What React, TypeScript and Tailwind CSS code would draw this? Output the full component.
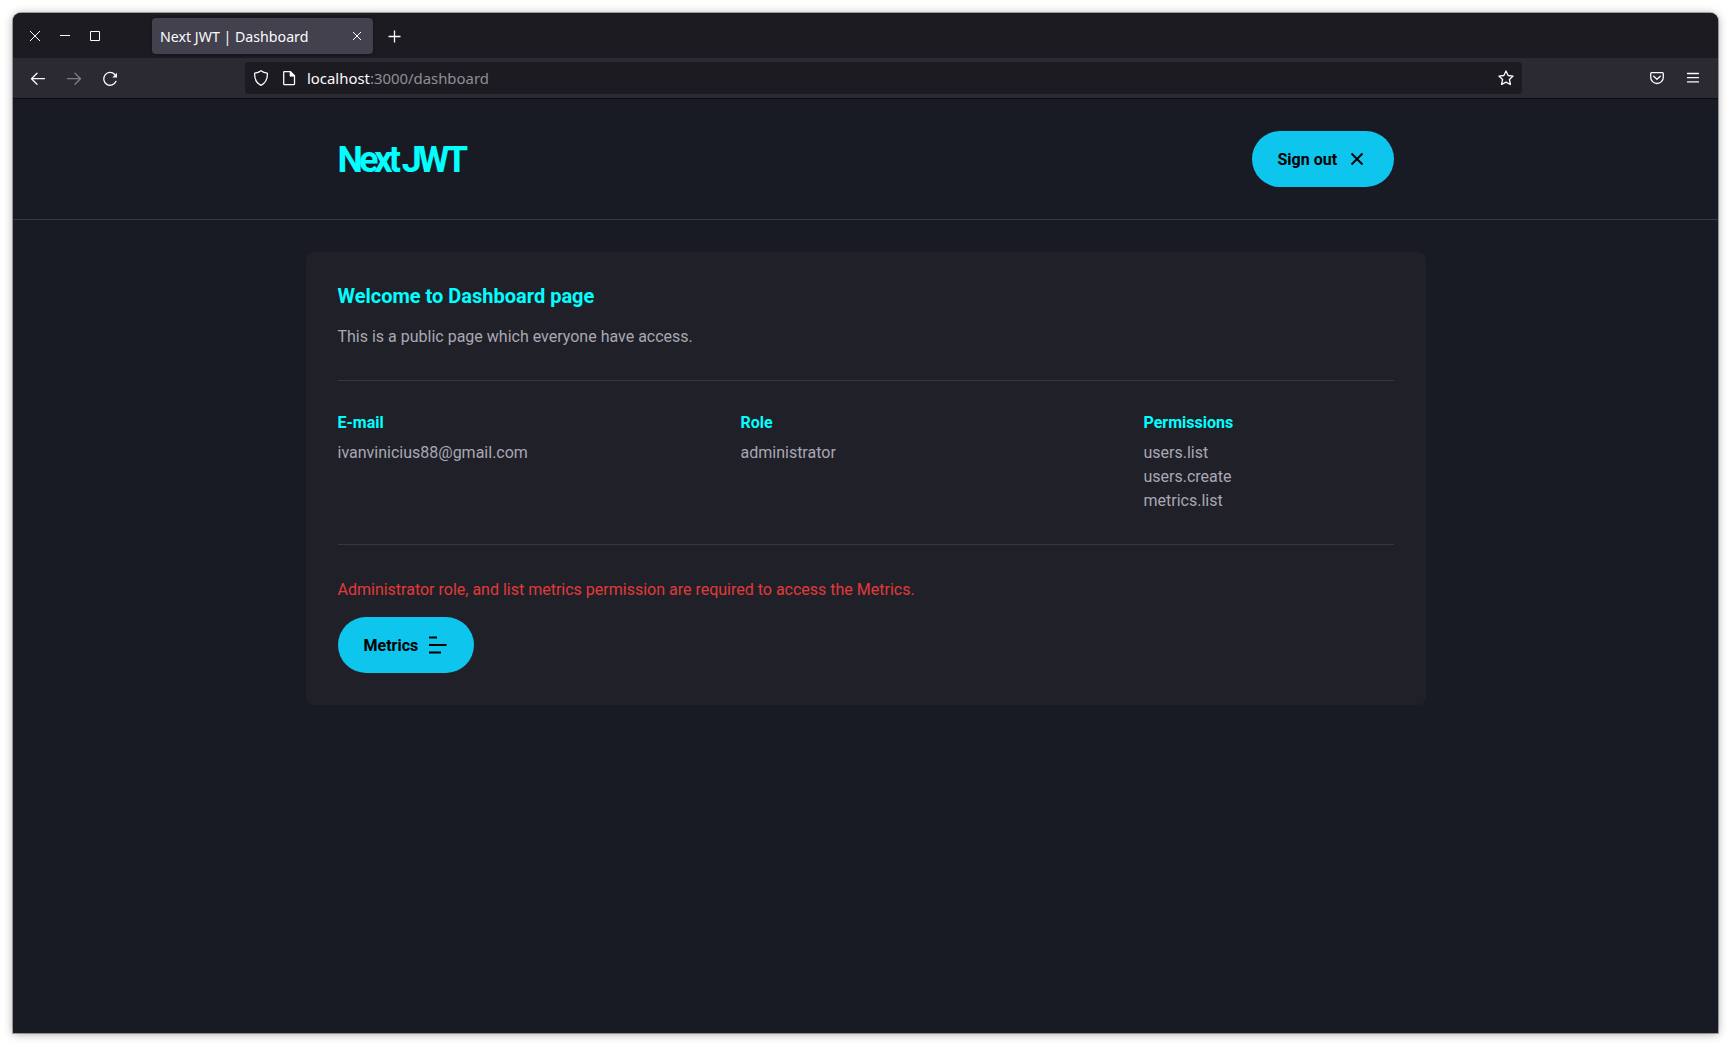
import React from "react";

const ui = "font-['Noto_Sans',sans-serif]";

function PillButton({ label, icon, className }: { label: string; icon: React.ReactNode; className: string }) {
  return (
    <button className={`flex h-14 items-center rounded-[28px] bg-[#0ec6ed] pl-[26px] text-base font-bold text-black ${className}`}>
      <span className="pt-0.5">{label}</span>
      {icon}
    </button>
  );
}

function TabBar() {
  return (
    <div className="flex h-[45px] bg-[#1c1b22] text-[#fbfbfe]">
      <svg className="ml-[12px] h-[45px] w-[127px]" viewBox="0 0 127 45" fill="none" stroke="currentColor">
        <path d="M5 18l10 10M15 18L5 28M35 22.5h10M65.5 18.5h9v9h-9z" />
      </svg>
      <div className="mt-[5px] flex h-9 w-[221px] items-center rounded bg-[#42414d] pl-2 pr-[10px] shadow-[0_0_3px_rgba(0,0,0,0.5)]">
        <span className={`${ui} flex-1 whitespace-nowrap pt-0.5 text-[14.2px]`}>Next JWT | Dashboard</span>
        <svg className="size-3" viewBox="0 0 12 12" stroke="currentColor" fill="none">
          <path d="M2 2l8 8M10 2L2 10" />
        </svg>
      </div>
      <svg className="ml-[15px] mt-[17px] size-[13px]" viewBox="0 0 13 13" stroke="currentColor" strokeWidth="1.3" fill="none">
        <path d="M6.5 .5v12M.5 6.5h12" />
      </svg>
    </div>
  );
}

function Toolbar() {
  return (
    <div className="flex h-[41px] items-start border-b border-[#0c0c0d] bg-[#2b2a33] pt-1 text-[#fbfbfe]">
      <svg className="h-8 w-[232px]" viewBox="0 0 232 32" fill="none" stroke="currentColor" strokeWidth="1.3" strokeLinecap="round" strokeLinejoin="round">
        <path d="M31.5 16.7H18.7M24 11.2l-5.5 5.5 5.5 5.5" />
        <path d="M54.5 16.7h12.8M62 11.2l5.5 5.5-5.5 5.5" opacity=".4" />
        <path d="M103 19.3a6.4 6.4 0 1 1-1.2-6.8" />
        <path d="M104 10.8v4.7h-4.7z" fill="currentColor" stroke="none" />
      </svg>
      <div className="flex h-8 w-[1277px] items-center rounded bg-[#1c1b22]">
        <svg className="h-8 w-[62px]" viewBox="0 0 62 32" fill="none" stroke="currentColor" strokeWidth="1.3" strokeLinejoin="round">
          <path d="M16 8.8q-2.6 2-6.3 2.4c-.4 5.5 1.8 9.9 6.3 12.2 4.5-2.3 6.7-6.7 6.3-12.2q-3.7-.4-6.3-2.4z" />
          <path d="M38.7 10.2q0-.5.5-.5h6.3l4 4v8.3q0 .7-.7.7h-9.4q-.7 0-.7-.7z" />
          <path d="M45 9.5v4.7h4.8z" fill="currentColor" strokeWidth=".7" />
        </svg>
        <span className={`${ui} flex-1 text-[14.9px] text-[#8f8f95]`}>
          <span className="text-[#fbfbfe]">localhost</span>:3000/dashboard
        </span>
        <svg className="mr-2 size-4" viewBox="0 0 16 16" fill="none" stroke="currentColor" strokeWidth="1.3" strokeLinejoin="round">
          <path d="M8 1l2.1 4.5 5 .6-3.7 3.4 1 5L8 12.1l-4.4 2.4 1-5L.9 6.1l5-.6z" />
        </svg>
      </div>
      <svg className="ml-[127px] mt-2 h-4 w-[52px]" viewBox="0 0 52 16" fill="none" stroke="currentColor" strokeWidth="1.3" strokeLinecap="round" strokeLinejoin="round">
        <path d="M2.7 2.7h10.6q1 0 1 1v3.5a6.3 6.3 0 0 1-12.6 0v-3.5q0-1 1-1z" />
        <path d="M4.7 6.2L8 9.3l3.3-3.1" />
        <path d="M38.5 3.5h11M38.5 7.7h11M38.5 11.9h11" />
      </svg>
    </div>
  );
}

function Field({ label, values }: { label: string; values: string[] }) {
  return (
    <div className="w-[250px]">
      <h3 className="mb-[9px] text-base leading-[19px] font-bold text-[#00ffff]">{label}</h3>
      {values.map((v) => (
        <p key={v}>{v}</p>
      ))}
    </div>
  );
}

export default function App() {
  return (
    <div className="h-[1047px] overflow-hidden bg-white p-[13px] font-[Roboto,sans-serif]">
      <div className="h-[1020px] w-[1704.5px] overflow-hidden rounded-t-lg bg-[#191b24] shadow-[0_0_0_1px_rgba(0,0,0,0.3),0_1px_10px_rgba(0,0,0,0.35)]">
        <TabBar />
        <Toolbar />
        <header className="border-b border-[#353646]">
          <div className="ml-[292.5px] flex h-[120px] w-[1120px] items-center justify-between px-8">
            <h1 className="pt-0.5 text-4xl font-bold tracking-[-4px] text-[#00ffff]">Next JWT</h1>
            <PillButton
              label="Sign out"
              className="w-[142px]"
              icon={
                <svg className="ml-[7.5px] size-6" viewBox="0 0 24 24" stroke="currentColor" strokeWidth="1.9" fill="none">
                  <path d="M6.5 6.5l11 11M17.5 6.5l-11 11" />
                </svg>
              }
            />
          </div>
        </header>
        <main className="mt-8 ml-[292.5px] w-[1120px] rounded-lg bg-[#202029] p-8 text-base leading-6 text-[#a8a8b3]">
          <h2 className="mb-[17px] text-xl leading-6 font-bold text-[#00ffff]">Welcome to Dashboard page</h2>
          <p>This is a public page which everyone have access.</p>
          <section className="mt-[31px] mb-[33px] flex justify-between border-y border-[#353646] pt-8 pb-[31px]">
            <Field label="E-mail" values={["ivanvinicius88@gmail.com"]} />
            <Field label="Role" values={["administrator"]} />
            <Field label="Permissions" values={["users.list", "users.create", "metrics.list"]} />
          </section>
          <p className="mb-[15px] text-[#e03a3a]">Administrator role, and list metrics permission are required to access the Metrics.</p>
          <PillButton
            label="Metrics"
            className="w-[136px]"
            icon={
              <svg className="ml-[7.5px] size-6" viewBox="0 0 24 24" stroke="currentColor" strokeWidth="1.9" fill="none">
                <path d="M3 4.5h8M3 12h17.5M3 19.5h12" />
              </svg>
            }
          />
        </main>
      </div>
    </div>
  );
}
